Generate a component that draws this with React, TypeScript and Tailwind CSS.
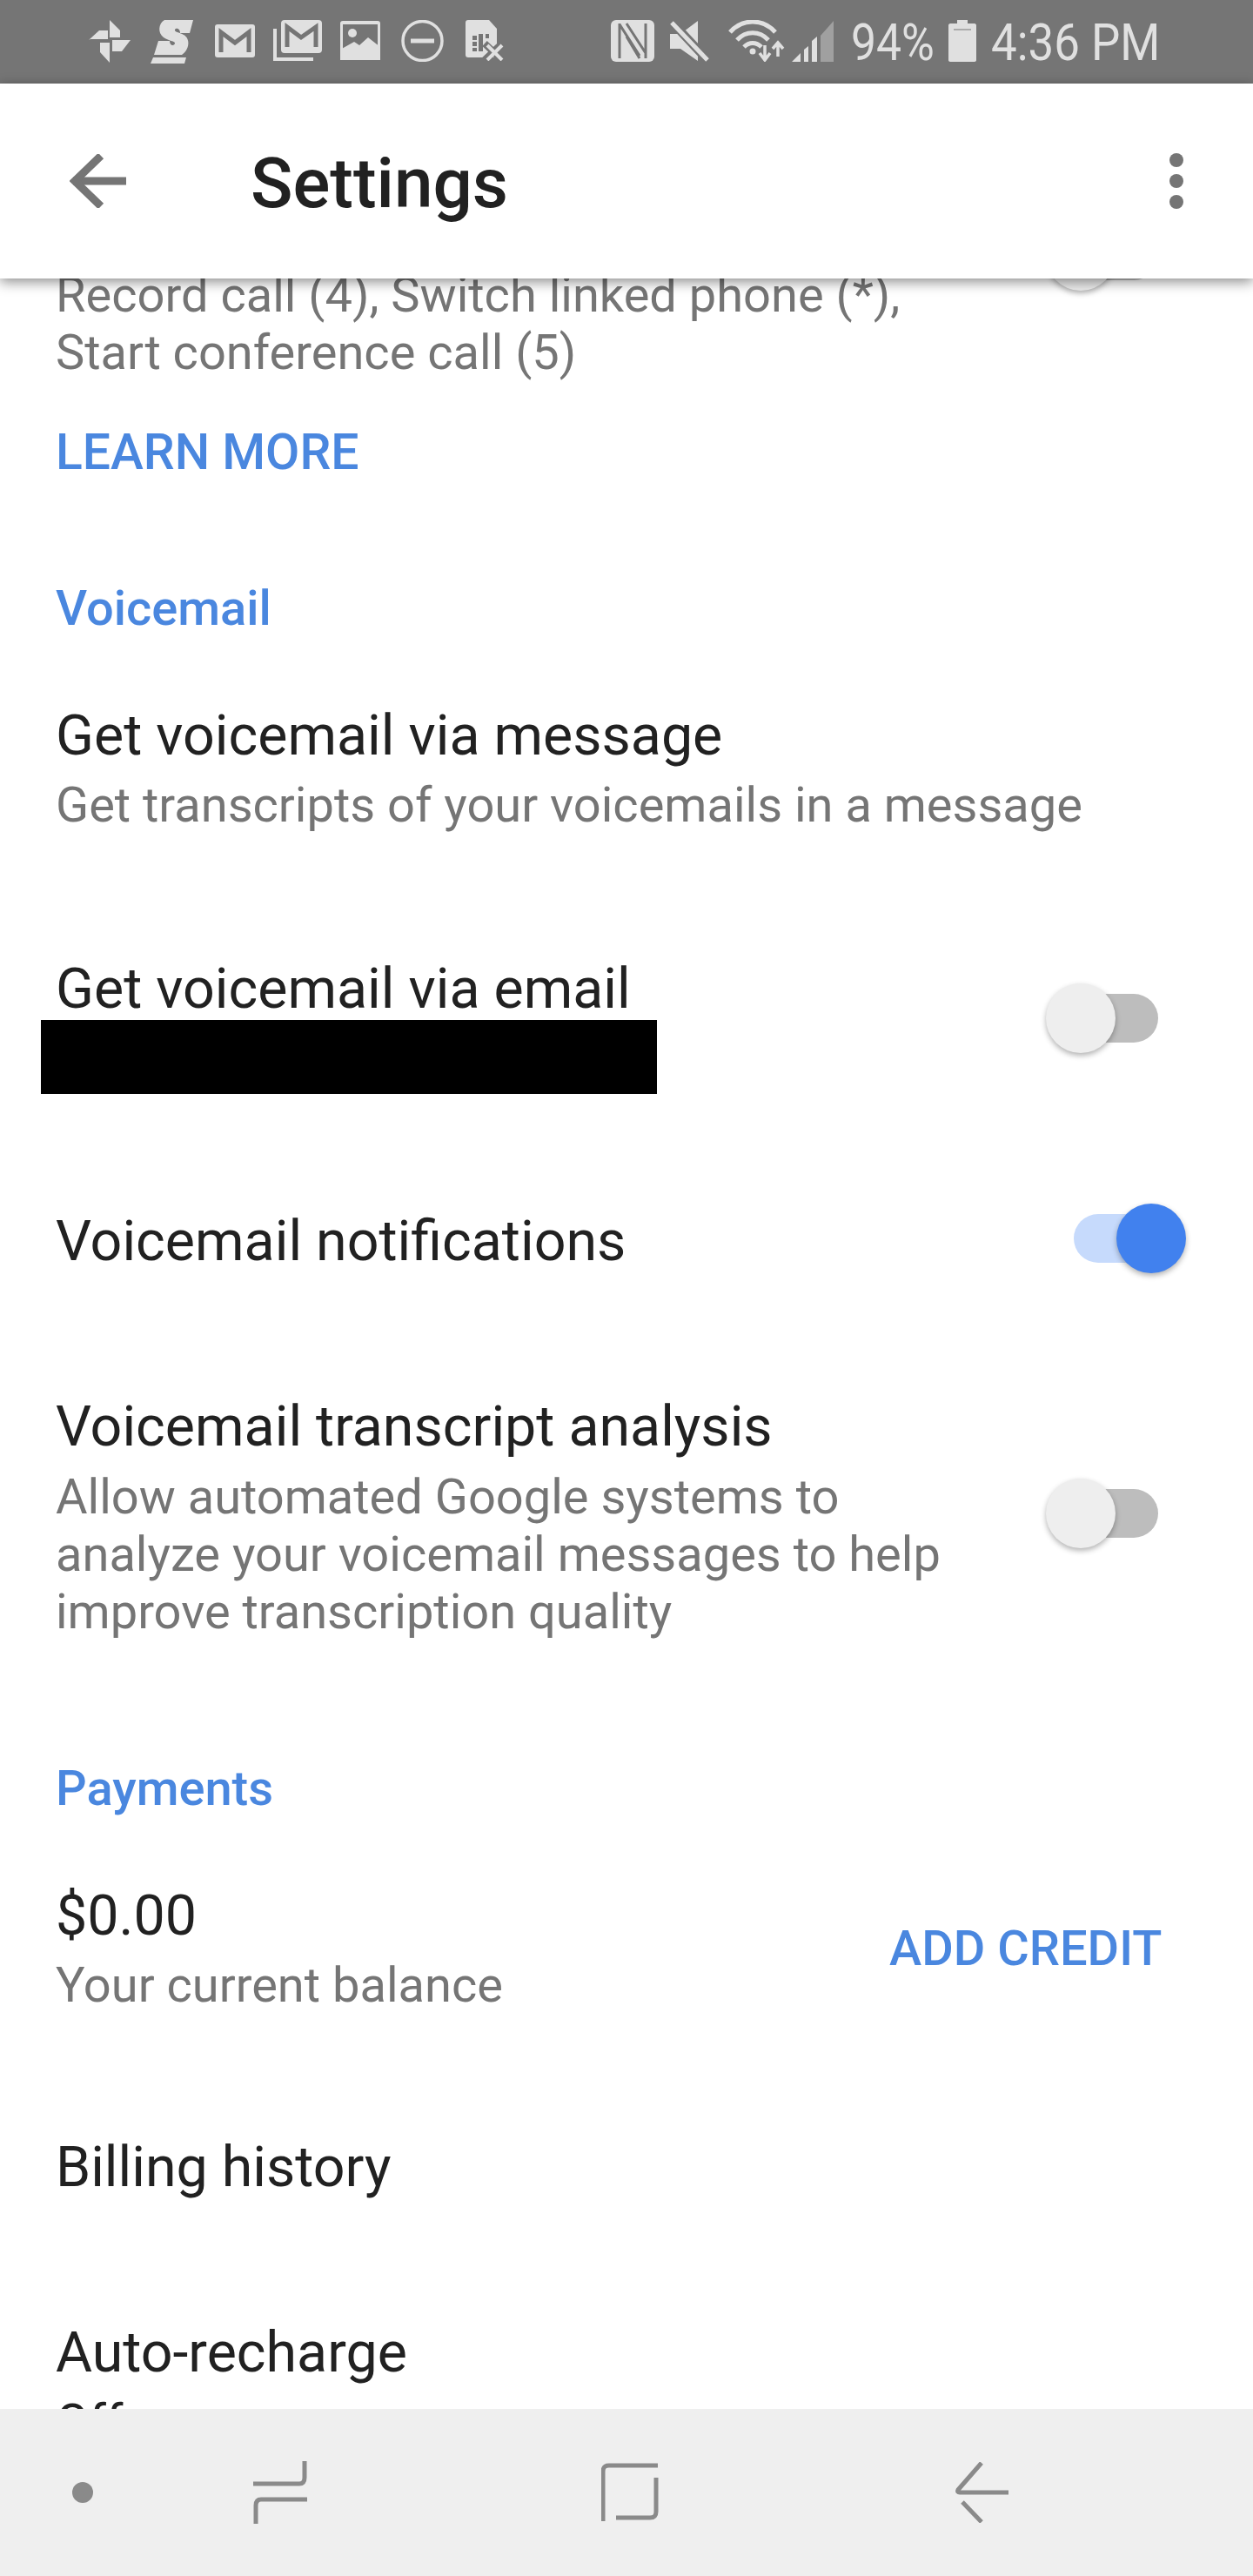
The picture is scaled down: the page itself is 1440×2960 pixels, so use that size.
const F = "[font-family:Roboto,'Liberation_Sans',sans-serif]";

function Toggle({ on = false, className = "" }: { on?: boolean; className?: string }) {
  return (
    <div className={`relative h-20 w-[161px] shrink-0 ${className}`}>
      <div className={`absolute left-8 top-3 h-14 w-[97px] rounded-full ${on ? "bg-[#c6dafc]" : "bg-[#bdbdbd]"}`} />
      <div
        className={`absolute top-0 size-20 rounded-full shadow-[0_3px_6px_rgba(0,0,0,0.3)] ${
          on ? "left-[81px] bg-[#4181ee]" : "left-0 bg-[#eeeeee]"
        }`}
      />
    </div>
  );
}

function StatusIcons() {
  const c = "#e0e0e0";
  return (
    <div className="flex h-24 items-start bg-[#757575] pl-[102px] pt-[23px]">
      {/* pinwheel */}
      <svg width="48" height="49" viewBox="0 0 48 49" fill={c}>
        <path d="M24 0 L36 12 V20 H24 Z" />
        <path d="M0 23 L12 12 H22 V22 H2 Z" />
        <path d="M27 23 H48 L38 36 H27 Z" />
        <path d="M13 26 H24 V49 L13 37 Z" />
      </svg>
      {/* S */}
      <svg className="ml-[23px]" width="50" height="50" viewBox="0 0 50 50" fill={c}>
        <path d="M16 0 H49 L45 15 H34 C34 9 29 9 28 11 C27 14 33 14 38 17 C46 21 45 34 36 40 H4 L9 24 H22 C22 30 27 30 28 27 C29 24 20 24 15 20 C8 15 9 4 16 0 Z" />
        <path d="M3 43 H41 L39 50 H0 Z" />
      </svg>
      {/* gmail */}
      <svg className="ml-[24px] mt-[5px]" width="46" height="38" viewBox="0 0 46 38">
        <rect width="46" height="38" rx="3" fill={c} />
        <path d="M7 32 V9 L23 21 L39 9 V32" fill="none" stroke="#757575" strokeWidth="5" />
      </svg>
      {/* gmail stack */}
      <svg className="ml-[21px]" width="56" height="47" viewBox="0 0 56 47">
        <rect x="9" width="47" height="38" rx="4" fill={c} />
        <path d="M16 31 V8 L32 20 L49 8 V31" fill="none" stroke="#757575" strokeWidth="5" />
        <path d="M2 10 V45 H46" fill="none" stroke={c} strokeWidth="4" />
      </svg>
      {/* image */}
      <svg className="ml-[21px] mt-px" width="46" height="45" viewBox="0 0 46 45">
        <rect width="46" height="45" rx="3" fill={c} />
        <rect x="3" y="4" width="40" height="30" fill="#757575" />
        <circle cx="14" cy="14" r="5" fill={c} />
        <path d="M0 33 L16 24 L22 28 L32 19 L46 30 V45 H0 Z" fill={c} />
      </svg>
      {/* DND */}
      <svg className="ml-[24px]" width="49" height="48" viewBox="0 0 49 48" fill="none" stroke={c}>
        <ellipse cx="24.5" cy="24" rx="22.5" ry="22.5" strokeWidth="3.5" />
        <path d="M11 24 H38" strokeWidth="5" />
      </svg>
      {/* SIM x */}
      <svg className="ml-[25px]" width="44" height="47" viewBox="0 0 44 47">
        <path d="M3 0 H27 L36 10 V43 H3 C1 43 0 42 0 40 V3 C0 1 1 0 3 0 Z" fill={c} />
        <path d="M8 18 H13 V23 H8 Z M8 25 H13 V30 H8 Z M8 32 H13 V36 H8 Z M15 16 H20 V36 H15 Z M23 16 H27 V21 H23 Z" fill="#757575" />
        <path d="M22 27 L42 46 M42 27 L22 46" stroke="#757575" strokeWidth="8" />
        <path d="M25 29 L42 46 M42 29 L25 46" stroke={c} strokeWidth="4" />
      </svg>
      {/* NFC */}
      <svg className="ml-[123px]" width="50" height="48" viewBox="0 0 50 48">
        <rect width="50" height="48" rx="6" fill={c} />
        <path d="M10 4 V44 M10 5 L33 41 M18 19 L33 44 M40 4 V44 M18 4 L40 38" fill="none" stroke="#757575" strokeWidth="3" />
      </svg>
      {/* mute */}
      <svg className="ml-[18px]" width="45" height="48" viewBox="0 0 45 48">
        <path d="M0 16 H12 L32 1 V47 L12 33 H0 Z" fill={c} />
        <path d="M2 2 L43 46" stroke="#757575" strokeWidth="10" />
        <path d="M2 3 L43 46" stroke={c} strokeWidth="5" />
      </svg>
      {/* wifi */}
      <svg className="ml-[22px]" width="66" height="48" viewBox="0 0 66 48" fill="none" stroke={c} strokeWidth="5">
        <path d="M2 14 C16 -2 40 -2 54 14" />
        <path d="M10 23 C20 12 36 12 46 23" />
        <path d="M18 31 C24 25 32 25 38 31" />
        <circle cx="28" cy="36" r="3.5" fill={c} stroke="none" />
        <path d="M42 29 V45 M36 38 L42 46 L48 38" strokeWidth="3.5" />
        <path d="M57 42 V27 M51 33 L57 26 L63 33" strokeWidth="3.5" />
      </svg>
      {/* signal */}
      <svg className="ml-[7px] mt-px" width="49" height="47" viewBox="0 0 49 47">
        <path d="M33 17 L48 0 V47 H33 Z" fill="#a0a0a0" />
        <path d="M0 47 L10 37 V47 Z M14 33 L19 29 V47 H14 Z M23 23 L29 18 V47 H23 Z" fill={c} />
      </svg>
      <span className={`ml-[19px] -mt-[9px] w-[95px] origin-left scale-x-[0.86] whitespace-nowrap text-[60px] font-normal leading-[70px] text-[#e0e0e0] ${F}`}>94%</span>
      {/* battery */}
      <svg className="ml-[17px]" width="32" height="48" viewBox="0 0 32 48">
        <path d="M10 0 H22 V4 H30 C31 4 32 5 32 6 V46 C32 47 31 48 30 48 H2 C1 48 0 47 0 46 V6 C0 5 1 4 2 4 H10 Z" fill={c} />
        <path d="M6 11 H26" stroke="#9a9a9a" strokeWidth="1.5" />
      </svg>
      <span className={`ml-[17px] -mt-[9px] w-[192px] origin-left scale-x-[0.88] whitespace-nowrap text-[60px] font-normal leading-[70px] text-[#e0e0e0] ${F}`}>4:36 PM</span>
    </div>
  );
}

function Header() {
  return (
    <header className="relative z-10 flex h-56 items-center bg-white pl-20 pr-20 shadow-[0_4px_14px_rgba(0,0,0,0.45)]">
      <svg width="66" height="62" viewBox="0 0 66 62" fill="none" stroke="#757575" strokeWidth="9">
        <path d="M65 31 H4" />
        <path d="M36 2 L6 31 L36 60" />
      </svg>
      <h1 className={`ml-[142px] flex-1 pt-[6px] text-[80px] font-medium leading-none text-[#212121] ${F}`}>Settings</h1>
      <div className="flex flex-col gap-2">
        <span className="size-4 rounded-full bg-[#757575]" />
        <span className="size-4 rounded-full bg-[#757575]" />
        <span className="size-4 rounded-full bg-[#757575]" />
      </div>
    </header>
  );
}

const link = "text-[56px] font-medium leading-[66px] text-[#4a87df]";
const primary = "text-[64.5px] leading-[76px] text-[#212121]";
const secondary = "text-[56px] leading-[66px] text-[#757575]";

function Content() {
  return (
    <main className={`min-h-0 flex-1 overflow-hidden bg-white pl-16 ${F}`}>
      <div className="-mt-[94px]">
        <div className="relative">
          <Toggle className="absolute top-[28px] left-[1138px]" />
          <p className={secondary}>
            Record call (4), Switch linked phone (*),
            <br />
            Start conference call (5)
          </p>
        </div>
        <p className={`mt-[49px] ${link} text-[57px]`}>LEARN MORE</p>
        <h2 className={`mt-[113px] ${link}`}>Voicemail</h2>

        <p className={`mt-[75px] ${primary}`}>Get voicemail via message</p>
        <p className={`mt-[9px] ${secondary}`}>Get transcripts of your voicemails in a message</p>

        <div className="mt-[140px] flex items-start">
          <div className="w-[1138px]">
            <p className={primary}>Get voicemail via email</p>
            <div className="-ml-[17px] -mt-[2px] h-[85px] w-[708px] bg-black" />
          </div>
          <Toggle className="mt-[32px]" />
        </div>

        <div className="mt-[125px] flex items-center">
          <p className={`w-[1138px] pt-[6px] ${primary}`}>Voicemail notifications</p>
          <Toggle on />
        </div>

        <div className="mt-[137px] flex items-start">
          <div className="w-[1138px]">
            <p className={primary}>Voicemail transcript analysis</p>
            <p className={`mt-[10px] ${secondary}`}>
              Allow automated Google systems to
              <br />
              analyze your voicemail messages to help
              <br />
              improve transcription quality
            </p>
          </div>
          <Toggle className="mt-[98px]" />
        </div>

        <h2 className={`mt-[137px] ${link}`}>Payments</h2>

        <div className="mt-[75px] flex items-center">
          <div className="w-[958px]">
            <p className={primary}>$0.00</p>
            <p className={`mt-[9px] ${secondary}`}>Your current balance</p>
          </div>
          <p className={link}>ADD CREDIT</p>
        </div>

        <p className={`mt-[138px] ${primary}`}>Billing history</p>
        <p className={`mt-[137px] ${primary}`}>Auto-recharge</p>
        <p className="mt-[9px] text-[56px] leading-[66px] text-[#212121]">Off</p>
      </div>
    </main>
  );
}

function NavBar() {
  const s = "#8a8a8a";
  return (
    <nav className="flex h-48 shrink-0 items-center bg-[#efefef] pl-[83px]">
      <span className="size-6 rounded-full bg-[#8a8a8a]" />
      <svg className="ml-[184px]" width="62" height="72" viewBox="0 0 62 72" fill="none" stroke={s}>
        <path d="M59 0 V19 C59 24 57 26 53 26 H0" strokeWidth="5" />
        <path d="M62 44 H9 C5 44 3 46 3 51 V72" strokeWidth="5" />
      </svg>
      <svg className="ml-[338px]" width="66" height="68" viewBox="0 0 66 68" fill="none" stroke={s}>
        <path d="M65 3 H9 C4 3 2 5 2 10 V67" strokeWidth="5" />
        <path d="M63 17 V56 C63 61 61 63 56 63 H17" strokeWidth="5" />
      </svg>
      <svg className="ml-[340px]" width="62" height="70" viewBox="0 0 62 70" fill="none" stroke={s} strokeWidth="5">
        <path d="M31 1 L4 32 C3 34 4 35 6 35 H62" />
        <path d="M9 46 L31 69" />
      </svg>
    </nav>
  );
}

export default function App() {
  return (
    <div className={`flex h-[2960px] w-[1440px] flex-col overflow-hidden bg-white ${F}`}>
      <StatusIcons />
      <Header />
      <Content />
      <NavBar />
    </div>
  );
}
